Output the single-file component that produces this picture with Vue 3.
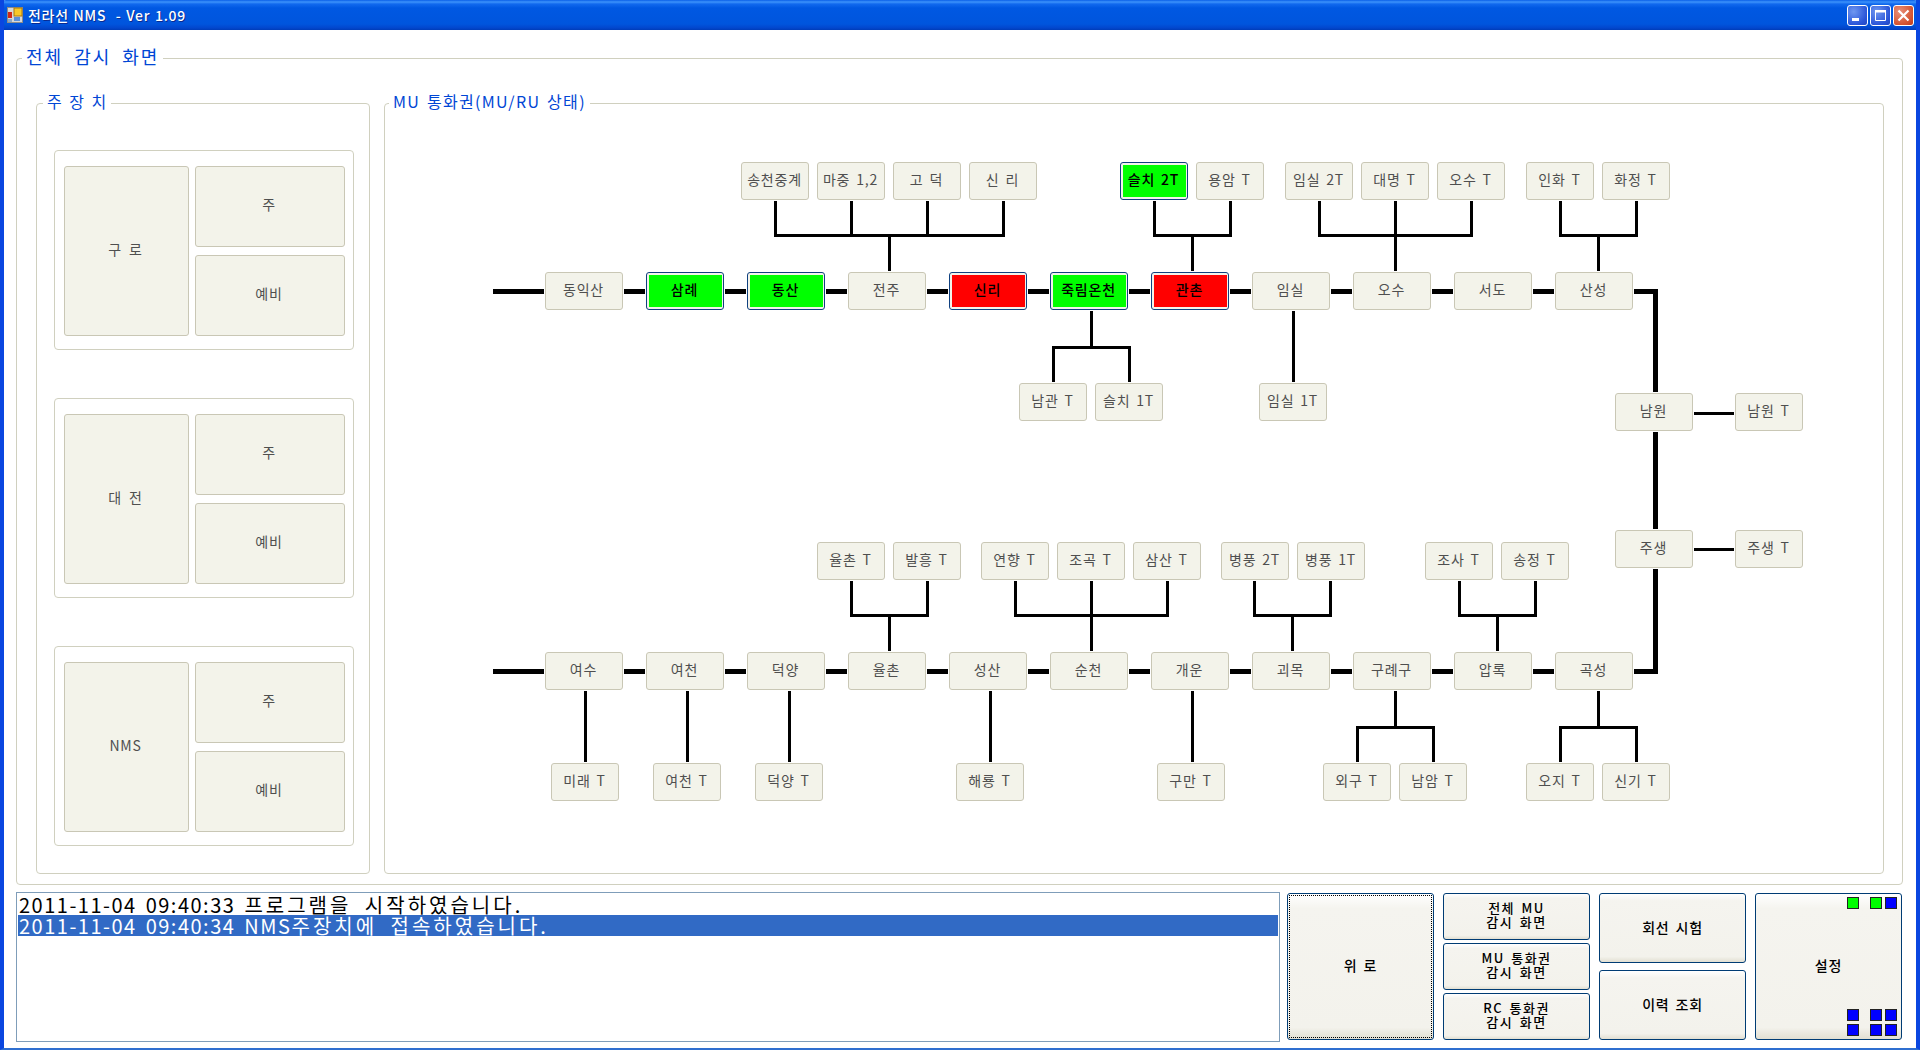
<template>
  <div class="window">
    <div class="titlebar">
      <svg class="appicon" width="16" height="16" viewBox="0 0 16 16">
        <rect x="0" y="0" width="16" height="16" fill="#8c8c8c" />
        <rect x="1" y="1" width="14" height="14" fill="#d8d8d8" />
        <rect x="7" y="1" width="8" height="8" fill="#f8c828" stroke="#a87810" />
        <rect x="1" y="5" width="4" height="6" fill="#d02818" />
        <rect x="7" y="10" width="6" height="4" fill="#5c90d8" />
        <rect x="1" y="12" width="4" height="3" fill="#8ca8c8" />
      </svg>
      <span class="title">전라선 NMS &nbsp;- Ver 1.09</span>
      <div class="controls">
        <div class="ctl">
          <svg width="21" height="21" viewBox="0 0 21 21"><rect x="5" y="13" width="7" height="3" fill="#fff" /></svg>
        </div>
        <div class="ctl">
          <svg width="21" height="21" viewBox="0 0 21 21"><path d="M5.5 5.5h10v10h-10z" fill="none" stroke="#fff" /><rect x="5" y="5" width="11" height="2.5" fill="#fff" /></svg>
        </div>
        <div class="ctl close">
          <svg width="21" height="21" viewBox="0 0 21 21"><path d="M5.5 5.5l10 10M15.5 5.5l-10 10" stroke="#fff" stroke-width="2.2" /></svg>
        </div>
      </div>
    </div>

    <div class="content">
      <div class="group outer">
        <span class="legend big">전체 감시 화면</span>

        <div class="group devices">
          <span class="legend spaced">주 장 치</span>
          <div v-for="s in sites" :key="s" class="group site">
            <div class="tile main">{{ s }}</div>
            <div class="tile">주</div>
            <div class="tile">예비</div>
          </div>
        </div>

        <div class="group mu">
          <span class="legend wide">MU 통화권(MU/RU 상태)</span>
          <div class="canvas">
            <svg class="wires" width="1498" height="768" viewBox="385 104 1498 768">
              <path d="M493 291.5H1655.5V671.5H493" fill="none" stroke="#000" stroke-width="5" />
              <path :d="thinPath" fill="none" stroke="#000" stroke-width="3" />
            </svg>
            <div
              v-for="n in nodes"
              :key="n.label + n.x"
              class="node"
              :class="n.state"
              :style="{ left: n.x - 385 + 'px', top: n.y - 104 + 'px', width: n.w + 'px' }"
            >
              <span>{{ n.label }}</span>
            </div>
          </div>
        </div>
      </div>

      <div class="bottom">
        <div class="log">
          <div class="row">2011-11-04 09:40:33 <span class="ko">프로그램을 시작하였습니다.</span></div>
          <div class="row selected">2011-11-04 09:40:34 NMS<span class="ko">주장치에 접속하였습니다.</span></div>
        </div>
        <div class="buttons">
          <button class="btn focus"><span>위 로</span></button>
          <div class="stack three">
            <button class="btn">전체 MU<br />감시 화면</button>
            <button class="btn">MU 통화권<br />감시 화면</button>
            <button class="btn">RC 통화권<br />감시 화면</button>
          </div>
          <div class="stack two">
            <button class="btn">회선 시험</button>
            <button class="btn">이력 조회</button>
          </div>
          <button class="btn settings">
            설정
            <span class="leds top">
              <i class="on"></i><i class="on"></i><i class="blue"></i>
            </span>
            <span class="leds low">
              <i class="blue"></i><i class="blue"></i><i class="blue"></i>
              <i class="blue"></i><i class="blue"></i><i class="blue"></i>
            </span>
          </button>
        </div>
      </div>
    </div>
  </div>
</template>

<script setup>
import { computed } from 'vue'

const sites = ['구 로', '대 전', 'NMS']

const main = (label, x, y, state = '') => ({ label, x, y, w: 78, state })
const sub = (label, x, y, state = '') => ({ label, x, y, w: 68, state })

const nodes = [
  main('동익산', 545, 272),
  main('삼례', 646, 272, 'green'),
  main('동산', 747, 272, 'green'),
  main('전주', 848, 272),
  main('신리', 949, 272, 'red'),
  main('죽림온천', 1050, 272, 'green'),
  main('관촌', 1151, 272, 'red'),
  main('임실', 1252, 272),
  main('오수', 1353, 272),
  main('서도', 1454, 272),
  main('산성', 1555, 272),
  main('남원', 1615, 393),
  main('주생', 1615, 530),
  main('여수', 545, 652),
  main('여천', 646, 652),
  main('덕양', 747, 652),
  main('율촌', 848, 652),
  main('성산', 949, 652),
  main('순천', 1050, 652),
  main('개운', 1151, 652),
  main('괴목', 1252, 652),
  main('구례구', 1353, 652),
  main('압록', 1454, 652),
  main('곡성', 1555, 652),

  sub('송천중계', 741, 162),
  sub('마중 1,2', 817, 162),
  sub('고 덕', 893, 162),
  sub('신 리', 969, 162),
  sub('슬치 2T', 1120, 162, 'green'),
  sub('용암 T', 1196, 162),
  sub('임실 2T', 1285, 162),
  sub('대명 T', 1361, 162),
  sub('오수 T', 1437, 162),
  sub('인화 T', 1526, 162),
  sub('화정 T', 1602, 162),
  sub('남관 T', 1019, 383),
  sub('슬치 1T', 1095, 383),
  sub('임실 1T', 1259, 383),
  sub('남원 T', 1735, 393),
  sub('주생 T', 1735, 530),

  sub('율촌 T', 817, 542),
  sub('발흥 T', 893, 542),
  sub('연향 T', 981, 542),
  sub('조곡 T', 1057, 542),
  sub('삼산 T', 1133, 542),
  sub('병풍 2T', 1221, 542),
  sub('병풍 1T', 1297, 542),
  sub('조사 T', 1425, 542),
  sub('송정 T', 1501, 542),
  sub('미래 T', 551, 763),
  sub('여천 T', 653, 763),
  sub('덕양 T', 755, 763),
  sub('해룡 T', 956, 763),
  sub('구만 T', 1157, 763),
  sub('외구 T', 1323, 763),
  sub('남암 T', 1399, 763),
  sub('오지 T', 1526, 763),
  sub('신기 T', 1602, 763),
]

// stem x, bar y, leaf end y, main end y, leaf xs
const buses = [
  [889.5, 235.5, 200, 272, [775.5, 851.5, 927.5, 1003.5]],
  [1192.5, 235.5, 200, 272, [1154.5, 1230.5]],
  [1395.5, 235.5, 200, 272, [1319.5, 1395.5, 1471.5]],
  [1598.5, 235.5, 200, 272, [1560.5, 1636.5]],
  [1091.5, 347.5, 383, 310, [1053.5, 1129.5]],
  [1293.5, 347.5, 383, 310, [1293.5]],
  [889.5, 615.5, 580, 652, [851.5, 927.5]],
  [1091.5, 615.5, 580, 652, [1015.5, 1091.5, 1167.5]],
  [1292.5, 615.5, 580, 652, [1254.5, 1330.5]],
  [1497.5, 615.5, 580, 652, [1459.5, 1535.5]],
  [585.5, 727.5, 763, 690, [585.5]],
  [687.5, 727.5, 763, 690, [687.5]],
  [789.5, 727.5, 763, 690, [789.5]],
  [990.5, 727.5, 763, 690, [990.5]],
  [1192.5, 727.5, 763, 690, [1192.5]],
  [1395.5, 727.5, 763, 690, [1357.5, 1433.5]],
  [1598.5, 727.5, 763, 690, [1560.5, 1636.5]],
]

const thinPath = computed(() => {
  let d = 'M1692 413.5H1735M1692 549.5H1735'
  for (const [stem, bar, leaf, end, xs] of buses) {
    d += `M${stem} ${bar}V${end}`
    for (const x of xs) d += `M${x} ${leaf}V${bar}`
    if (xs.length > 1) d += `M${xs[0] - 1.5} ${bar}H${xs[xs.length - 1] + 1.5}`
  }
  return d
})
</script>

<style>
html,
body {
  margin: 0;
  background: #0a3cc8;
}
</style>

<style scoped>
.window {
  width: 1920px;
  height: 1050px;
  box-sizing: border-box;
  display: flex;
  flex-direction: column;
  background: #fff;
  font-family: "Noto Sans CJK KR", "DejaVu Sans", sans-serif;
  border-left: 4px solid #0a46e0;
  border-right: 4px solid #0a46e0;
  border-bottom: 2px solid #2f6fd0;
  overflow: hidden;
}

.titlebar {
  height: 30px;
  margin: 0 -4px;
  padding: 0 6px 0 7px;
  flex: none;
  display: flex;
  align-items: center;
  border-radius: 6px 6px 0 0;
  background: linear-gradient(#0a5fe8 0, #3d93fb 2px, #1169ee 4px, #0058e2 8px, #0055dd 24px, #0246cd 28px, #003cb8 30px);
}

.appicon {
  flex: none;
}

.title {
  margin-left: 5px;
  color: #fff;
  font-size: 14px;
  font-weight: 500;
  letter-spacing: 0.7px;
  word-spacing: 1px;
  text-shadow: 1px 1px 0 #0a2a90;
  white-space: pre;
}

.controls {
  margin-left: auto;
  display: flex;
  gap: 2px;
}

.ctl {
  width: 21px;
  height: 21px;
  box-sizing: border-box;
  border: 1px solid #fff;
  border-radius: 3px;
  background: radial-gradient(circle at 30% 30%, #6f97f0, #2a55d8 70%, #2247c0);
  display: flex;
  align-items: center;
  justify-content: center;
}

.ctl svg {
  flex: none;
}

.ctl.close {
  background: radial-gradient(circle at 30% 30%, #e8907a, #d4532f 70%, #c03a1c);
}

.content {
  flex: 1;
  min-height: 0;
  padding: 28px 13px 0 12px;
  display: flex;
  flex-direction: column;
  gap: 7px;
}

.group {
  position: relative;
  box-sizing: border-box;
  border: 1px solid #d0d0bf;
  border-radius: 4px;
}

.legend {
  position: absolute;
  left: 6px;
  top: -12px;
  padding: 0 4px;
  background: #fff;
  color: #0046d5;
  font-size: 16px;
  line-height: 18px;
  white-space: nowrap;
}

.legend.big {
  top: -15px;
  left: 5px;
  font-size: 18px;
  line-height: 24px;
  letter-spacing: 2px;
  word-spacing: 5px;
}

.legend.spaced {
  letter-spacing: 1px;
  word-spacing: 2px;
}

.legend.wide {
  left: 4px;
  letter-spacing: 1.3px;
  word-spacing: 2px;
}

.outer {
  height: 827px;
  flex: none;
  padding: 44px 19px 10px 19px;
  display: flex;
  gap: 14px;
}

.devices {
  width: 334px;
  flex: none;
  padding: 46px 15px 0 17px;
  display: flex;
  flex-direction: column;
  gap: 48px;
}

.site {
  height: 200px;
  flex: none;
  padding: 15px 8px 0 9px;
  display: grid;
  grid-template-columns: 125px 150px;
  grid-template-rows: 81px 81px;
  gap: 8px 6px;
}

.tile {
  box-sizing: border-box;
  border: 1px solid #c9c7b5;
  border-radius: 3px;
  background: #f3f3ea;
  color: #4f4f4f;
  font-size: 14px;
  letter-spacing: 0.8px;
  word-spacing: 3px;
  display: flex;
  align-items: center;
  justify-content: center;
  padding: 0 2px 5px 0;
}

.tile.main {
  grid-row: 1 / span 2;
}

.mu {
  flex: 1;
}

.canvas {
  position: relative;
  width: 1498px;
  height: 768px;
}

.wires {
  position: absolute;
  left: 0;
  top: 0;
}

.node {
  position: absolute;
  height: 38px;
  box-sizing: border-box;
  border: 1px solid #c9c7b5;
  border-radius: 3px;
  background: #f3f3ea;
  box-shadow: 0 0 0 1px #fff;
  color: #4f4f4f;
  font-size: 14px;
  letter-spacing: 0.8px;
  word-spacing: 2px;
  white-space: nowrap;
  display: flex;
  align-items: center;
  justify-content: center;
  padding: 0 1px 4px 0;
}

.node.green,
.node.red {
  border-color: #0f4080;
  color: #000;
  font-weight: 500;
}

.node.green::before,
.node.red::before {
  content: "";
  position: absolute;
  inset: 2px 1px 2px 2px;
  background: #0f0;
}

.node.red::before {
  background: #f00;
}

.node span {
  position: relative;
}

.bottom {
  flex: none;
  height: 150px;
  display: flex;
  gap: 7px;
}

.log {
  width: 1264px;
  flex: none;
  box-sizing: border-box;
  border: 1px solid #7f9db9;
  padding: 1px;
  color: #000;
  font-size: 20px;
  letter-spacing: 1.5px;
  word-spacing: 3px;
}

.row {
  height: 21px;
  line-height: 21px;
  padding-left: 1px;
  white-space: nowrap;
}

.row.selected {
  background: #316ac5;
  color: #fff;
}

.ko {
  letter-spacing: 3px;
  word-spacing: 6px;
}

.buttons {
  flex: none;
  height: 147px;
  margin-top: 1px;
  display: flex;
  gap: 9px;
}

.btn {
  width: 147px;
  box-sizing: border-box;
  border: 1px solid #003c74;
  border-radius: 3px;
  padding: 0 0 3px;
  background: linear-gradient(#fff, #f5f4ef 10%, #f3f2ec 92%, #e2dfd2);
  color: #000;
  font-family: inherit;
  font-size: 14px;
  line-height: 14px;
  font-weight: 500;
  letter-spacing: 0.8px;
  word-spacing: 2px;
}

.stack.three .btn {
  font-size: 13px;
  letter-spacing: 1.5px;
}

.btn.focus {
  position: relative;
}

.btn.focus::after {
  content: "";
  position: absolute;
  inset: 1px;
  border: 1px dotted #000;
}

.stack {
  display: flex;
  flex-direction: column;
}

.stack .btn {
  flex: 1;
}

.stack.three {
  gap: 3px;
}

.stack.two {
  gap: 7px;
}

.settings {
  position: relative;
}

.leds {
  position: absolute;
  right: 4px;
  display: grid;
  grid-template-columns: repeat(3, 12px);
  column-gap: 3px;
  row-gap: 3px;
}

.leds i:nth-child(3n + 1) {
  margin-right: 8px;
  margin-left: -8px;
}

.leds.top {
  top: 3px;
}

.leds.low {
  bottom: 3px;
}

.leds i {
  display: block;
  width: 12px;
  height: 12px;
  box-sizing: border-box;
  border: 1px solid #222;
}

.leds .on {
  background: #0f0;
}

.leds .blue {
  background: #00f;
}
</style>
